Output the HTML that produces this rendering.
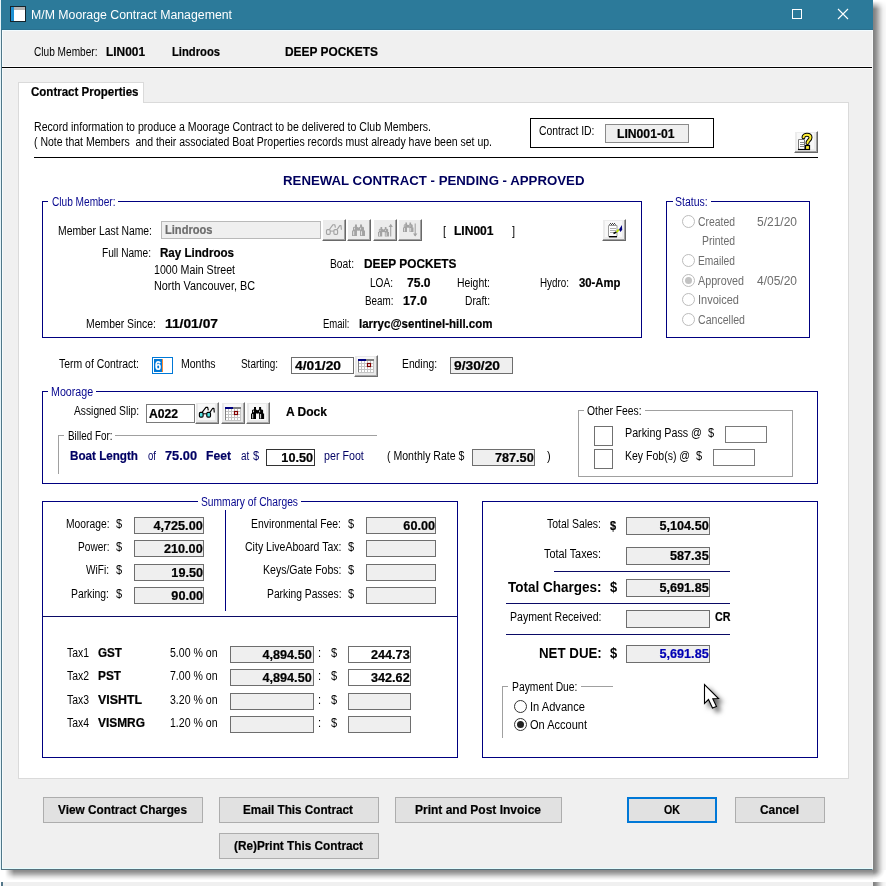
<!DOCTYPE html>
<html><head><meta charset="utf-8"><title>M/M Moorage Contract Management</title>
<style>
html,body{margin:0;padding:0}
body{width:886px;height:886px;overflow:hidden;position:relative;background:#fff;font-family:"Liberation Sans",sans-serif;}
.a{position:absolute;box-sizing:border-box}
#win{left:1px;top:0;width:872px;height:870px;background:#f0f0f0;border-left:1px solid #4f7789;border-right:1px solid #f6f8f9;border-bottom:1px solid #56707c}
#win2{left:1px;top:882px;width:872px;height:12px;background:#f0f0f0;border-left:2px solid #55788a}
#tb{left:1px;top:0;width:872px;height:30px;background:#2c7a9a}
.t{position:absolute;white-space:pre;transform-origin:0 0;color:#000;font-size:12px;line-height:16px}
.b{font-weight:bold;-webkit-text-stroke:0.2px}
.B{font-weight:bold;font-size:12px;line-height:16px}
.BB{font-weight:bold;font-size:14px;line-height:18px}
.h{font-weight:bold;font-size:13.5px;line-height:17px;color:#00005e}
.tt{font-size:12px;line-height:16px;color:#fff}
.n{color:#06068e}
.dn{color:#000064}
.g{color:#6d6d6d}
.bl{color:#0000b4}
.gb{border:1px solid #000080}
.gg{border:1px solid #a0a0a0}
.lab{background:#fff}
.f{background:#efefef;border:1px solid #6e6e6e}
.fw{background:#fff;border:1px solid #6e6e6e}
.btn{background:#e1e1e1;border:1px solid #adadad}
.ib{background:#ececec;border-top:1px solid #fff;border-left:1px solid #fff;border-right:1px solid #696969;border-bottom:1px solid #696969;box-shadow:inset -1px -1px 0 #a0a0a0}
.ib2{background:#e9e9e9;border-top:1px solid #fff;border-left:1px solid #fff;border-right:1px solid #6e6e6e;border-bottom:1px solid #6e6e6e;box-shadow:inset -1px -1px 0 #a8a8a8}
.rad{width:13px;height:13px;border-radius:50%;background:#fff;border:1px solid #333}
.radg{border-color:#bcbcbc}
.hl{background:#0a0a66;height:1px}
svg{position:absolute;overflow:visible}

.shr{background:linear-gradient(to right,rgba(0,0,0,.5) 0,rgba(0,0,0,.46) 2px,rgba(0,0,0,.37) 4px,rgba(0,0,0,.25) 6px,rgba(0,0,0,.14) 8px,rgba(0,0,0,.06) 10px,rgba(0,0,0,.02) 13px)}
.shb{background:linear-gradient(to bottom,rgba(0,0,0,.46) 0,rgba(0,0,0,.43) 1.5px,rgba(0,0,0,.31) 4px,rgba(0,0,0,.15) 6.5px,rgba(0,0,0,.06) 8.5px,rgba(0,0,0,0) 10.5px)}

</style></head>
<body>
<div class="a" style="left:0;top:0;width:1px;height:870px;background:#e4f3f8"></div>
<div id="win2" class="a"></div>
<div class="a shr" style="left:873px;top:0;width:13px;height:870px;-webkit-mask-image:linear-gradient(to bottom,transparent 1px,#000 9px);mask-image:linear-gradient(to bottom,transparent 1px,#000 9px)"></div>
<div class="a shb" style="left:2px;top:870px;width:871px;height:11px;-webkit-mask-image:linear-gradient(to right,transparent 3px,#000 12px);mask-image:linear-gradient(to right,transparent 3px,#000 12px)"></div>
<div class="a" style="left:873px;top:870px;width:13px;height:11px;background:radial-gradient(ellipse 12px 10px at 0 0,rgba(0,0,0,.5) 0,rgba(0,0,0,.4) 30%,rgba(0,0,0,.2) 55%,rgba(0,0,0,.06) 80%,rgba(0,0,0,0) 100%)"></div>
<div class="a shr" style="left:873px;top:882px;width:13px;height:4px"></div>
<div id="win" class="a"></div>
<div id="tb" class="a"></div>
<div class="a" style="left:2px;top:868px;width:871px;height:1px;background:#e4fdff"></div>
<div class="a" style="left:2px;top:31px;width:1px;height:837px;background:#f6fbfc"></div>
<!-- title icon -->
<div class="a" style="left:10px;top:6px;width:16px;height:16px;background:#fff;border:1px solid #14242c"></div>
<div class="a" style="left:11px;top:7px;width:3px;height:14px;background:#1e90d2"></div>
<div class="a" style="left:14px;top:7px;width:11px;height:3px;background:#b4b4b4"></div>
<!-- max / close -->
<div class="a" style="left:792px;top:9px;width:10px;height:10px;border:1px solid #fff"></div>
<svg style="left:838px;top:9px" width="10" height="10" viewBox="0 0 10 10"><path d="M0 0L10 10M10 0L0 10" stroke="#fff" stroke-width="1.1" fill="none"/></svg>
<!-- header strip line -->
<div class="a" style="left:2px;top:66px;width:870px;height:3px;background:#fbfbfb"></div>
<div class="a" style="left:2px;top:67px;width:870px;height:1px;background:#000"></div>
<div class="a" style="left:2px;top:30px;width:870px;height:1px;background:#f2fbff"></div>
<div class="a" style="left:1px;top:29px;width:872px;height:1px;background:#2a7190"></div>
<!-- tab panel -->
<div class="a" style="left:18px;top:102px;width:831px;height:677px;background:#fff;border:1px solid #dadada"></div>
<div class="a" style="left:18px;top:82px;width:126px;height:21px;background:#fff;border:1px solid #dadada;border-bottom:none"></div>
<!-- intro line -->
<div class="a" style="left:34px;top:157px;width:784px;height:1px;background:#000"></div>
<!-- contract id -->
<div class="a" style="left:530px;top:118px;width:184px;height:30px;border:1px solid #000"></div>
<div class="a f" style="left:605px;top:124px;width:84px;height:19px;border-color:#8a8a8a"></div>
<!-- help btn -->
<div class="a ib" style="left:794px;top:131px;width:24px;height:22px"></div>

<!-- club member group -->
<div class="a gb" style="left:42px;top:201px;width:600px;height:137px"></div>
<div class="a lab" style="left:48px;top:196px;width:70px;height:12px"></div>
<div class="a f" style="left:161px;top:221px;width:160px;height:18px;border-color:#b9b9b9"></div>
<div class="a ib" style="left:322px;top:219px;width:24px;height:22px"></div>
<div class="a ib" style="left:347px;top:219px;width:24px;height:22px"></div>
<div class="a ib" style="left:373px;top:219px;width:24px;height:22px"></div>
<div class="a ib" style="left:398px;top:219px;width:24px;height:22px"></div>
<div class="a ib" style="left:602px;top:219px;width:24px;height:22px"></div>
<!-- status group -->
<div class="a gb" style="left:666px;top:201px;width:144px;height:137px"></div>
<div class="a lab" style="left:673px;top:196px;width:38px;height:12px"></div>
<div class="a rad radg" style="left:682px;top:215px"></div>
<div class="a rad radg" style="left:682px;top:254px"></div>
<div class="a rad radg" style="left:682px;top:274px"></div>
<div class="a" style="left:685px;top:277px;width:7px;height:7px;border-radius:50%;background:#c2c2c2"></div>
<div class="a rad radg" style="left:682px;top:293px"></div>
<div class="a rad radg" style="left:682px;top:313px"></div>
<!-- term row -->
<div class="a" style="left:152px;top:357px;width:21px;height:17px;background:#fff;border:1px solid #0078d7"></div>
<div class="a" style="left:154px;top:359px;width:8px;height:13px;background:#0078d7"></div>
<div class="a" style="left:162px;top:359px;width:1px;height:13px;background:#ff8a30"></div>
<div class="a fw" style="left:291px;top:357px;width:63px;height:17px"></div>
<div class="a ib2" style="left:354px;top:355px;width:24px;height:22px"></div>
<div class="a f" style="left:450px;top:357px;width:63px;height:17px"></div>
<!-- moorage group -->
<div class="a gb" style="left:42px;top:391px;width:776px;height:93px"></div>
<div class="a lab" style="left:48px;top:386px;width:48px;height:12px"></div>
<div class="a fw" style="left:146px;top:404px;width:49px;height:19px;border-color:#7a7a7a"></div>
<div class="a ib2" style="left:195px;top:402px;width:24px;height:22px"></div>
<div class="a ib2" style="left:221px;top:402px;width:24px;height:22px"></div>
<div class="a ib2" style="left:246px;top:402px;width:24px;height:22px"></div>
<div class="a" style="left:58px;top:435px;width:319px;height:39px;border-top:1px solid #a0a0a0;border-left:1px solid #a0a0a0"></div>
<div class="a lab" style="left:64px;top:430px;width:51px;height:12px"></div>
<div class="a fw" style="left:266px;top:449px;width:49px;height:17px;border-color:#333"></div>
<div class="a f" style="left:472px;top:449px;width:63px;height:17px"></div>
<div class="a gg" style="left:578px;top:410px;width:215px;height:67px"></div>
<div class="a lab" style="left:584px;top:405px;width:61px;height:12px"></div>
<div class="a" style="left:594px;top:426px;width:19px;height:20px;background:#fff;border:1px solid #707070"></div>
<div class="a" style="left:594px;top:449px;width:19px;height:20px;background:#fff;border:1px solid #707070"></div>
<div class="a" style="left:725px;top:426px;width:42px;height:17px;background:#fff;border:1px solid #7a7a7a"></div>
<div class="a" style="left:713px;top:449px;width:42px;height:17px;background:#fff;border:1px solid #7a7a7a"></div>
<!-- summary group -->
<div class="a gb" style="left:42px;top:501px;width:416px;height:257px"></div>
<div class="a lab" style="left:198px;top:496px;width:103px;height:12px"></div>
<div class="a hl" style="left:42px;top:616px;width:416px"></div>
<div class="a" style="left:225px;top:510px;width:1px;height:101px;background:#000080"></div>
<div class="a f" style="left:134px;top:517px;width:70px;height:17px"></div>
<div class="a f" style="left:134px;top:540px;width:70px;height:17px"></div>
<div class="a f" style="left:134px;top:564px;width:70px;height:17px"></div>
<div class="a f" style="left:134px;top:587px;width:70px;height:17px"></div>
<div class="a f" style="left:366px;top:517px;width:70px;height:17px"></div>
<div class="a f" style="left:366px;top:540px;width:70px;height:17px"></div>
<div class="a f" style="left:366px;top:564px;width:70px;height:17px"></div>
<div class="a f" style="left:366px;top:587px;width:70px;height:17px"></div>
<div class="a f" style="left:230px;top:646px;width:84px;height:17px"></div>
<div class="a f" style="left:230px;top:669px;width:84px;height:17px"></div>
<div class="a f" style="left:230px;top:693px;width:84px;height:17px"></div>
<div class="a f" style="left:230px;top:716px;width:84px;height:17px"></div>
<div class="a fw" style="left:348px;top:646px;width:63px;height:17px"></div>
<div class="a fw" style="left:348px;top:669px;width:63px;height:17px"></div>
<div class="a f" style="left:348px;top:693px;width:63px;height:17px"></div>
<div class="a f" style="left:348px;top:716px;width:63px;height:17px"></div>
<!-- totals group -->
<div class="a gb" style="left:482px;top:501px;width:336px;height:257px"></div>
<div class="a f" style="left:626px;top:517px;width:84px;height:18px"></div>
<div class="a f" style="left:626px;top:547px;width:84px;height:18px"></div>
<div class="a f" style="left:626px;top:579px;width:84px;height:18px"></div>
<div class="a f" style="left:626px;top:610px;width:84px;height:18px"></div>
<div class="a f" style="left:626px;top:645px;width:84px;height:18px"></div>
<div class="a hl" style="left:554px;top:571px;width:176px"></div>
<div class="a hl" style="left:506px;top:603px;width:224px"></div>
<div class="a hl" style="left:506px;top:634px;width:224px"></div>
<div class="a" style="left:502px;top:686px;width:111px;height:52px;border-top:1px solid #a0a0a0;border-left:1px solid #a0a0a0"></div>
<div class="a lab" style="left:508px;top:681px;width:73px;height:12px"></div>
<div class="a rad" style="left:514px;top:700px"></div>
<div class="a rad" style="left:514px;top:718px"></div>
<div class="a" style="left:517px;top:721px;width:7px;height:7px;border-radius:50%;background:#222"></div>
<!-- cursor -->
<svg style="left:704px;top:684px" width="18" height="28" viewBox="0 0 18 28"><path d="M0.5 0.5V19.5L4.5 15.5L8.5 24L12.5 22.5L8.8 14.8L14.5 14.5Z" fill="#fff" stroke="#000" stroke-width="1.1" style="filter:drop-shadow(4px 4px 2.5px rgba(0,0,0,.6))"/></svg>
<!-- buttons -->
<div class="a btn" style="left:43px;top:797px;width:160px;height:26px"></div>
<div class="a btn" style="left:219px;top:797px;width:160px;height:26px"></div>
<div class="a btn" style="left:395px;top:797px;width:167px;height:26px"></div>
<div class="a btn" style="left:627px;top:797px;width:90px;height:26px;border:2px solid #0078d7"></div>
<div class="a btn" style="left:735px;top:797px;width:90px;height:26px"></div>
<div class="a btn" style="left:219px;top:833px;width:160px;height:26px"></div>
<!-- icon button inner faces -->
<div class="a" style="left:797px;top:133px;width:17px;height:16px;background:#f8f8f8"></div>
<div class="a" style="left:605px;top:221px;width:17px;height:16px;background:#f8f8f8"></div>
<div class="a" style="left:357px;top:357px;width:17px;height:16px;background:#f8f8f8"></div>
<div class="a" style="left:198px;top:404px;width:17px;height:16px;background:#f8f8f8"></div>
<div class="a" style="left:224px;top:404px;width:17px;height:16px;background:#f8f8f8"></div>
<div class="a" style="left:249px;top:404px;width:17px;height:16px;background:#f8f8f8"></div>
<svg style="left:797px;top:133px" width="18" height="18" viewBox="0 0 18 18">
<path d="M1.5 6.5h6v10h-6z" fill="#fff" stroke="#777" stroke-width="1"/><path d="M1 16.5h7" stroke="#000" stroke-width="1.2"/>
<path d="M3 9.5h4M3 11.5h4M3 13.5h4" stroke="#888" stroke-width="1"/>
<path d="M6.5 4.2C6.5 1 13.5 1 13.5 4.5C13.5 7 10.5 7.5 10.5 10" fill="none" stroke="#000" stroke-width="4" stroke-linecap="round"/>
<path d="M6.5 4.2C6.5 1 13.5 1 13.5 4.5C13.5 7 10.5 7.5 10.5 10" fill="none" stroke="#ffee33" stroke-width="2" stroke-linecap="round"/>
<rect x="8.5" y="12.5" width="4" height="4" fill="#ffee33" stroke="#000" stroke-width="1.2"/>
</svg>
<svg style="left:0;top:0" width="886" height="886" viewBox="0 0 886 886">
<rect x="326.5" y="229.6" width="3.7" height="4.8" rx="1.1" fill="none" stroke="#a3a3a3" stroke-width="1.15"/><rect x="333.9" y="229.6" width="3.7" height="4.8" rx="1.1" fill="none" stroke="#a3a3a3" stroke-width="1.15"/><path d="M330.2 231.1H333.9" stroke="#a3a3a3" stroke-width="1" fill="none"/><path d="M329.4 229.5L333.0 224.7H334.8L335.4 227.7" fill="none" stroke="#a3a3a3" stroke-width="1.15" stroke-linejoin="round"/><path d="M337.2 229.4L339.8 225.6H341.0L341.4 229.8" fill="none" stroke="#a3a3a3" stroke-width="1.15" stroke-linejoin="round"/>
<path d="M352.00 236.00L352.00 230.54L352.99 230.54L352.99 227.57L353.98 226.70L354.98 226.70L354.98 224.50L356.96 224.50L356.96 226.70L357.95 227.38L358.45 228.33L358.45 230.25L356.96 230.73L356.96 236.00Z" fill="#a3a3a3"/><path d="M365.00 236.00L365.00 230.54L364.01 230.54L364.01 227.57L363.02 226.70L362.02 226.70L362.02 224.50L360.04 224.50L360.04 226.70L359.05 227.38L358.55 228.33L358.55 230.25L360.04 230.73L360.04 236.00Z" fill="#a3a3a3"/><path d="M356.96 227.57L360.04 227.57L360.04 229.87L358.50 230.82L356.96 229.87Z" fill="#a3a3a3"/><path d="M353.29 231.21L354.18 231.21L354.18 235.33L353.29 235.33ZM361.13 231.21L362.02 231.21L362.02 235.33L361.13 235.33ZM353.98 227.76L354.78 227.76L354.78 229.48L353.98 229.48ZM360.24 227.76L361.03 227.76L361.03 229.48L360.24 229.48Z" fill="#ececec"/>
<path d="M378.00 236.50L378.00 231.99L378.84 231.99L378.84 229.53L379.68 228.82L380.52 228.82L380.52 227.00L382.20 227.00L382.20 228.82L383.04 229.38L383.46 230.17L383.46 231.75L382.20 232.15L382.20 236.50Z" fill="#a3a3a3"/><path d="M389.00 236.50L389.00 231.99L388.16 231.99L388.16 229.53L387.32 228.82L386.48 228.82L386.48 227.00L384.80 227.00L384.80 228.82L383.96 229.38L383.54 230.17L383.54 231.75L384.80 232.15L384.80 236.50Z" fill="#a3a3a3"/><path d="M382.20 229.53L384.80 229.53L384.80 231.43L383.50 232.22L382.20 231.43Z" fill="#a3a3a3"/><path d="M379.09 232.54L379.85 232.54L379.85 235.95L379.09 235.95ZM385.73 232.54L386.48 232.54L386.48 235.95L385.73 235.95ZM379.68 229.69L380.35 229.69L380.35 231.12L379.68 231.12ZM384.97 229.69L385.64 229.69L385.64 231.12L384.97 231.12Z" fill="#ececec"/><path d="M390.7 224.5V236.5" stroke="#a3a3a3" stroke-width="1.1" fill="none"/><path d="M388.5 227.1L390.7 223.9L392.9 227.1Z" fill="#a3a3a3"/>
<path d="M403.00 232.00L403.00 227.49L403.80 227.49L403.80 225.03L404.60 224.32L405.40 224.32L405.40 222.50L407.01 222.50L407.01 224.32L407.81 224.88L408.21 225.67L408.21 227.25L407.01 227.65L407.01 232.00Z" fill="#a3a3a3"/><path d="M413.50 232.00L413.50 227.49L412.70 227.49L412.70 225.03L411.90 224.32L411.10 224.32L411.10 222.50L409.49 222.50L409.49 224.32L408.69 224.88L408.29 225.67L408.29 227.25L409.49 227.65L409.49 232.00Z" fill="#a3a3a3"/><path d="M407.01 225.03L409.49 225.03L409.49 226.93L408.25 227.72L407.01 226.93Z" fill="#a3a3a3"/><path d="M404.04 228.04L404.76 228.04L404.76 231.45L404.04 231.45ZM410.37 228.04L411.10 228.04L411.10 231.45L410.37 231.45ZM404.60 225.19L405.24 225.19L405.24 226.62L404.60 226.62ZM409.65 225.19L410.29 225.19L410.29 226.62L409.65 226.62Z" fill="#ececec"/><path d="M415.2 223.5V236.0" stroke="#a3a3a3" stroke-width="1.1" fill="none"/><path d="M413.0 233.4L415.2 236.6L417.4 233.4Z" fill="#a3a3a3"/>
<rect x="199.4" y="412.3" width="3.7" height="4.8" rx="1.1" fill="#55e6e6" stroke="#000" stroke-width="1.15"/><rect x="206.8" y="412.3" width="3.7" height="4.8" rx="1.1" fill="#55e6e6" stroke="#000" stroke-width="1.15"/><path d="M203.1 413.8H206.8" stroke="#000" stroke-width="1" fill="none"/><path d="M202.3 412.2L205.9 407.4H207.7L208.3 410.4" fill="none" stroke="#000" stroke-width="1.15" stroke-linejoin="round"/><path d="M210.1 412.1L212.7 408.3H213.9L214.3 412.5" fill="none" stroke="#000" stroke-width="1.15" stroke-linejoin="round"/>
<rect x="225" y="407" width="16" height="13" fill="#fff"/><rect x="225" y="407" width="8" height="2" fill="#000080"/><rect x="233" y="407" width="8" height="2" fill="#808080"/><path d="M225.5 409v11M228.5 409v11M231.5 409v11M234.5 409v11M237.5 409v11M240.5 409v11M225 411.5h16M225 414.5h16M225 417.5h16M225 420.5h16" stroke="#c4c4c4" stroke-width="1" fill="none"/><path d="M225.5 409v11" stroke="#808080" stroke-width="1"/><rect x="234.5" y="411.5" width="3" height="3" fill="#fff" stroke="#800000" stroke-width="1.2"/>
<path d="M251.00 419.10L251.00 413.40L252.00 413.40L252.00 410.30L253.00 409.40L254.00 409.40L254.00 407.10L256.00 407.10L256.00 409.40L257.00 410.10L257.50 411.10L257.50 413.10L256.00 413.60L256.00 419.10Z" fill="#000"/><path d="M264.10 419.10L264.10 413.40L263.10 413.40L263.10 410.30L262.10 409.40L261.10 409.40L261.10 407.10L259.10 407.10L259.10 409.40L258.10 410.10L257.60 411.10L257.60 413.10L259.10 413.60L259.10 419.10Z" fill="#000"/><path d="M256.00 410.30L259.10 410.30L259.10 412.70L257.55 413.70L256.00 412.70Z" fill="#000"/><path d="M252.30 414.10L253.20 414.10L253.20 418.40L252.30 418.40ZM260.20 414.10L261.10 414.10L261.10 418.40L260.20 418.40ZM253.00 410.50L253.80 410.50L253.80 412.30L253.00 412.30ZM259.30 410.50L260.10 410.50L260.10 412.30L259.30 412.30Z" fill="#fff"/>
<rect x="358" y="359" width="16" height="13" fill="#fff"/><rect x="358" y="359" width="8" height="2" fill="#000080"/><rect x="366" y="359" width="8" height="2" fill="#808080"/><path d="M358.5 361v11M361.5 361v11M364.5 361v11M367.5 361v11M370.5 361v11M373.5 361v11M358 363.5h16M358 366.5h16M358 369.5h16M358 372.5h16" stroke="#c4c4c4" stroke-width="1" fill="none"/><path d="M358.5 361v11" stroke="#808080" stroke-width="1"/><rect x="367.5" y="363.5" width="3" height="3" fill="#fff" stroke="#800000" stroke-width="1.2"/>
<path d="M608.5 225.5h8.5v11h-8.5z" fill="#fff" stroke="#9a9a9a" stroke-width="1"/><path d="M609 236.7h8" stroke="#000" stroke-width="1.4"/><path d="M609.5 224.5l1-1 1 1 1-1 1 1 1-1 1 1" stroke="#000" stroke-width="1" fill="none"/><path d="M610 228.5h6M610 230.5h6M610 232.5h4" stroke="#b0b0b0" stroke-width="1"/><path d="M613.5 233.5l3-1.5" stroke="#000" stroke-width="1.4"/><path d="M616.5 232l2.5-2.5" stroke="#b8e000" stroke-width="1.8"/><path d="M619 229.6l2.9-4.6 0.3 4.8-1.7 2.3z" fill="#000080"/>
</svg>

<div id="txt">
<span id="t0" class="t r" style="top:44.00px;left:33.50px;transform:scaleX(0.8426);">Club Member:</span>
<span id="t1" class="t b" style="top:44.00px;left:106.00px;transform:scaleX(0.9909);">LIN001</span>
<span id="t2" class="t b" style="top:44.00px;left:172.00px;transform:scaleX(0.9352);">Lindroos</span>
<span id="t3" class="t b" style="top:44.00px;left:285.00px;transform:scaleX(0.9913);">DEEP POCKETS</span>
<span id="t4" class="t b" style="top:84.00px;left:30.50px;transform:scaleX(0.9596);">Contract Properties</span>
<span id="t5" class="t r" style="top:119.00px;left:34.00px;transform:scaleX(0.8804);">Record information to produce a Moorage Contract to be delivered to Club Members.</span>
<span id="t6" class="t r" style="top:134.00px;left:34.00px;transform:scaleX(0.8747);">( Note that Members  and their associated Boat Properties records must already have been set up.</span>
<span id="t7" class="t r" style="top:123.00px;left:538.50px;transform:scaleX(0.8668);">Contract ID:</span>
<span id="t8" class="t b" style="top:126.00px;left:616.50px;transform:scaleX(1.0141);">LIN001-01</span>
<span id="t9" class="t h" style="top:172.00px;left:282.50px;transform:scaleX(0.9804);">RENEWAL CONTRACT - PENDING - APPROVED</span>
<span id="t10" class="t r n" style="top:194.00px;left:51.50px;transform:scaleX(0.8426);">Club Member:</span>
<span id="t11" class="t r" style="top:223.00px;left:58.00px;transform:scaleX(0.8647);">Member Last Name:</span>
<span id="t12" class="t b g" style="top:222.00px;left:164.50px;transform:scaleX(0.9254);">Lindroos</span>
<span id="t13" class="t r" style="top:223.00px;left:443.00px;transform:scaleX(0.92);">[</span>
<span id="t14" class="t b" style="top:223.00px;left:453.50px;transform:scaleX(1.0036);">LIN001</span>
<span id="t15" class="t r" style="top:223.00px;left:511.50px;transform:scaleX(0.92);">]</span>
<span id="t16" class="t r" style="top:245.00px;left:102.00px;transform:scaleX(0.8446);">Full Name:</span>
<span id="t17" class="t b" style="top:245.00px;left:160.00px;transform:scaleX(0.9650);">Ray Lindroos</span>
<span id="t18" class="t r" style="top:262.00px;left:154.00px;transform:scaleX(0.8863);">1000 Main Street</span>
<span id="t19" class="t r" style="top:278.00px;left:154.00px;transform:scaleX(0.9030);">North Vancouver, BC</span>
<span id="t20" class="t r" style="top:316.00px;left:86.00px;transform:scaleX(0.8674);">Member Since:</span>
<span id="t21" class="t b" style="top:316.00px;left:165.00px;transform:scaleX(1.1506);">11/01/07</span>
<span id="t22" class="t r" style="top:256.00px;left:330.00px;transform:scaleX(0.8562);">Boat:</span>
<span id="t23" class="t b" style="top:256.00px;left:363.50px;transform:scaleX(0.9860);">DEEP POCKETS</span>
<span id="t24" class="t r" style="top:275.00px;left:370.00px;transform:scaleX(0.8407);">LOA:</span>
<span id="t25" class="t b" style="top:275.00px;left:406.50px;transform:scaleX(1.0060);">75.0</span>
<span id="t26" class="t r" style="top:293.00px;left:364.50px;transform:scaleX(0.8216);">Beam:</span>
<span id="t27" class="t b" style="top:293.00px;left:402.50px;transform:scaleX(1.0274);">17.0</span>
<span id="t28" class="t r" style="top:275.00px;left:456.50px;transform:scaleX(0.8677);">Height:</span>
<span id="t29" class="t r" style="top:293.00px;left:464.50px;transform:scaleX(0.8520);">Draft:</span>
<span id="t30" class="t r" style="top:275.00px;left:539.50px;transform:scaleX(0.8205);">Hydro:</span>
<span id="t31" class="t b" style="top:275.00px;left:578.50px;transform:scaleX(0.9428);">30-Amp</span>
<span id="t32" class="t r" style="top:316.00px;left:322.50px;transform:scaleX(0.7948);">Email:</span>
<span id="t33" class="t b" style="top:316.00px;left:358.50px;transform:scaleX(0.9599);">larryc@sentinel-hill.com</span>
<span id="t34" class="t r n" style="top:194.00px;left:675.30px;transform:scaleX(0.8753);">Status:</span>
<span id="t35" class="t r g" style="top:214.00px;left:698.00px;transform:scaleX(0.8664);">Created</span>
<span id="t36" class="t r g" style="top:214.00px;left:757.00px;transform:scaleX(0.9988);">5/21/20</span>
<span id="t37" class="t r g" style="top:233.00px;left:702.00px;transform:scaleX(0.8677);">Printed</span>
<span id="t38" class="t r g" style="top:253.00px;left:698.00px;transform:scaleX(0.8533);">Emailed</span>
<span id="t39" class="t r g" style="top:273.00px;left:698.00px;transform:scaleX(0.8954);">Approved</span>
<span id="t40" class="t r g" style="top:273.00px;left:757.00px;transform:scaleX(0.9988);">4/05/20</span>
<span id="t41" class="t r g" style="top:292.00px;left:698.00px;transform:scaleX(0.9172);">Invoiced</span>
<span id="t42" class="t r g" style="top:312.00px;left:698.00px;transform:scaleX(0.8806);">Cancelled</span>
<span id="t43" class="t r" style="top:356.00px;left:59.00px;transform:scaleX(0.8693);">Term of Contract:</span>
<span id="t44" class="t b" style="top:358.00px;left:155.00px;transform:scaleX(0.92);color:#fff;">6</span>
<span id="t45" class="t r" style="top:356.00px;left:181.00px;transform:scaleX(0.8765);">Months</span>
<span id="t46" class="t r" style="top:356.00px;left:241.00px;transform:scaleX(0.8277);">Starting:</span>
<span id="t47" class="t b" style="top:358.00px;left:294.50px;transform:scaleX(1.1487);">4/01/20</span>
<span id="t48" class="t r" style="top:356.00px;left:402.00px;transform:scaleX(0.8599);">Ending:</span>
<span id="t49" class="t b" style="top:358.00px;left:453.50px;transform:scaleX(1.1487);">9/30/20</span>
<span id="t50" class="t r n" style="top:384.00px;left:50.80px;transform:scaleX(0.8908);">Moorage</span>
<span id="t51" class="t r" style="top:403.00px;left:74.00px;transform:scaleX(0.8547);">Assigned Slip:</span>
<span id="t52" class="t b" style="top:406.00px;left:149.00px;transform:scaleX(1.0109);">A022</span>
<span id="t53" class="t b" style="top:404.00px;left:286.00px;transform:scaleX(1.0023);">A Dock</span>
<span id="t54" class="t r" style="top:428.00px;left:67.50px;transform:scaleX(0.8236);">Billed For:</span>
<span id="t55" class="t b dn" style="top:448.00px;left:69.50px;transform:scaleX(0.9714);">Boat Length</span>
<span id="t56" class="t r dn" style="top:448.00px;left:147.50px;transform:scaleX(0.7988);">of</span>
<span id="t57" class="t b dn" style="top:448.00px;left:165.00px;transform:scaleX(1.0656);">75.00</span>
<span id="t58" class="t b dn" style="top:448.00px;left:206.00px;transform:scaleX(1.0127);">Feet</span>
<span id="t59" class="t r dn" style="top:448.00px;left:240.70px;transform:scaleX(0.8287);">at</span>
<span id="t60" class="t r dn" style="top:448.00px;left:252.50px;transform:scaleX(0.92);">$</span>
<span id="t61" class="t b" style="top:450.00px;right:572.80px;transform-origin:100% 0;transform:scaleX(1.055);">10.50</span>
<span id="t62" class="t r dn" style="top:448.00px;left:323.50px;transform:scaleX(0.8903);">per Foot</span>
<span id="t63" class="t r" style="top:448.00px;left:386.50px;transform:scaleX(0.8802);">( Monthly Rate $</span>
<span id="t64" class="t b" style="top:450.00px;right:352.30px;transform-origin:100% 0;transform:scaleX(1.055);">787.50</span>
<span id="t65" class="t r" style="top:448.00px;left:546.50px;transform:scaleX(0.92);">)</span>
<span id="t66" class="t r" style="top:403.00px;left:587.00px;transform:scaleX(0.8602);">Other Fees:</span>
<span id="t67" class="t r" style="top:425.00px;left:625.00px;transform:scaleX(0.8931);">Parking Pass @</span>
<span id="t68" class="t r" style="top:425.00px;left:708.00px;transform:scaleX(0.92);">$</span>
<span id="t69" class="t r" style="top:448.00px;left:625.00px;transform:scaleX(0.8760);">Key Fob(s) @</span>
<span id="t70" class="t r" style="top:448.00px;left:696.00px;transform:scaleX(0.92);">$</span>
<span id="t71" class="t r n" style="top:494.00px;left:201.00px;transform:scaleX(0.8556);">Summary of Charges</span>
<span id="t72" class="t r" style="top:516.00px;left:65.50px;transform:scaleX(0.8579);">Moorage:</span>
<span id="t73" class="t r" style="top:516.00px;left:116.00px;transform:scaleX(0.92);">$</span>
<span id="t74" class="t r" style="top:539.00px;left:77.50px;transform:scaleX(0.8432);">Power:</span>
<span id="t75" class="t r" style="top:539.00px;left:116.00px;transform:scaleX(0.92);">$</span>
<span id="t76" class="t r" style="top:562.00px;left:86.00px;transform:scaleX(0.8416);">WiFi:</span>
<span id="t77" class="t r" style="top:562.00px;left:116.00px;transform:scaleX(0.92);">$</span>
<span id="t78" class="t r" style="top:586.00px;left:71.00px;transform:scaleX(0.8630);">Parking:</span>
<span id="t79" class="t r" style="top:586.00px;left:116.00px;transform:scaleX(0.92);">$</span>
<span id="t80" class="t b" style="top:518.00px;right:683.30px;transform-origin:100% 0;transform:scaleX(1.055);">4,725.00</span>
<span id="t81" class="t b" style="top:541.00px;right:683.30px;transform-origin:100% 0;transform:scaleX(1.055);">210.00</span>
<span id="t82" class="t b" style="top:565.00px;right:683.30px;transform-origin:100% 0;transform:scaleX(1.055);">19.50</span>
<span id="t83" class="t b" style="top:588.00px;right:683.30px;transform-origin:100% 0;transform:scaleX(1.055);">90.00</span>
<span id="t84" class="t r" style="top:516.00px;left:251.00px;transform:scaleX(0.8649);">Environmental Fee:</span>
<span id="t85" class="t r" style="top:516.00px;left:348.00px;transform:scaleX(0.92);">$</span>
<span id="t86" class="t r" style="top:539.00px;left:244.50px;transform:scaleX(0.8785);">City LiveAboard Tax:</span>
<span id="t87" class="t r" style="top:539.00px;left:348.00px;transform:scaleX(0.92);">$</span>
<span id="t88" class="t r" style="top:562.00px;left:262.50px;transform:scaleX(0.8783);">Keys/Gate Fobs:</span>
<span id="t89" class="t r" style="top:562.00px;left:348.00px;transform:scaleX(0.92);">$</span>
<span id="t90" class="t r" style="top:586.00px;left:266.50px;transform:scaleX(0.8591);">Parking Passes:</span>
<span id="t91" class="t r" style="top:586.00px;left:348.00px;transform:scaleX(0.92);">$</span>
<span id="t92" class="t b" style="top:518.00px;right:451.30px;transform-origin:100% 0;transform:scaleX(1.055);">60.00</span>
<span id="t93" class="t r" style="top:645.00px;left:67.00px;transform:scaleX(0.8675);">Tax1</span>
<span id="t94" class="t b" style="top:645.00px;left:98.00px;transform:scaleX(0.9728);">GST</span>
<span id="t95" class="t r" style="top:645.00px;left:170.00px;transform:scaleX(0.8789);">5.00 % on</span>
<span id="t96" class="t r" style="top:645.00px;left:318.00px;transform:scaleX(0.92);">:</span>
<span id="t97" class="t r" style="top:645.00px;left:330.50px;transform:scaleX(0.92);">$</span>
<span id="t98" class="t r" style="top:668.00px;left:67.00px;transform:scaleX(0.8675);">Tax2</span>
<span id="t99" class="t b" style="top:668.00px;left:98.00px;transform:scaleX(0.9853);">PST</span>
<span id="t100" class="t r" style="top:668.00px;left:170.00px;transform:scaleX(0.8789);">7.00 % on</span>
<span id="t101" class="t r" style="top:668.00px;left:318.00px;transform:scaleX(0.92);">:</span>
<span id="t102" class="t r" style="top:668.00px;left:330.50px;transform:scaleX(0.92);">$</span>
<span id="t103" class="t r" style="top:692.00px;left:67.00px;transform:scaleX(0.8675);">Tax3</span>
<span id="t104" class="t b" style="top:692.00px;left:98.00px;transform:scaleX(1.0311);">VISHTL</span>
<span id="t105" class="t r" style="top:692.00px;left:170.00px;transform:scaleX(0.8789);">3.20 % on</span>
<span id="t106" class="t r" style="top:692.00px;left:318.00px;transform:scaleX(0.92);">:</span>
<span id="t107" class="t r" style="top:692.00px;left:330.50px;transform:scaleX(0.92);">$</span>
<span id="t108" class="t r" style="top:715.00px;left:67.00px;transform:scaleX(0.8675);">Tax4</span>
<span id="t109" class="t b" style="top:715.00px;left:98.00px;transform:scaleX(0.9927);">VISMRG</span>
<span id="t110" class="t r" style="top:715.00px;left:170.00px;transform:scaleX(0.8789);">1.20 % on</span>
<span id="t111" class="t r" style="top:715.00px;left:318.00px;transform:scaleX(0.92);">:</span>
<span id="t112" class="t r" style="top:715.00px;left:330.50px;transform:scaleX(0.92);">$</span>
<span id="t113" class="t b" style="top:647.00px;right:573.80px;transform-origin:100% 0;transform:scaleX(1.055);">4,894.50</span>
<span id="t114" class="t b" style="top:670.00px;right:573.80px;transform-origin:100% 0;transform:scaleX(1.055);">4,894.50</span>
<span id="t115" class="t b" style="top:647.00px;right:476.30px;transform-origin:100% 0;transform:scaleX(1.055);">244.73</span>
<span id="t116" class="t b" style="top:670.00px;right:476.30px;transform-origin:100% 0;transform:scaleX(1.055);">342.62</span>
<span id="t117" class="t r" style="top:516.00px;left:547.00px;transform:scaleX(0.8703);">Total Sales:</span>
<span id="t118" class="t b" style="top:518.00px;left:610.00px;transform:scaleX(0.92);">$</span>
<span id="t119" class="t b" style="top:518.00px;right:177.30px;transform-origin:100% 0;transform:scaleX(1.055);">5,104.50</span>
<span id="t120" class="t r" style="top:546.00px;left:544.00px;transform:scaleX(0.9025);">Total Taxes:</span>
<span id="t121" class="t b" style="top:548.00px;right:177.30px;transform-origin:100% 0;transform:scaleX(1.055);">587.35</span>
<span id="t122" class="t BB" style="top:578.00px;left:508.00px;transform:scaleX(0.9651);">Total Charges:</span>
<span id="t123" class="t BB" style="top:578.00px;left:610.30px;transform:scaleX(0.92);">$</span>
<span id="t124" class="t b" style="top:580.00px;right:177.30px;transform-origin:100% 0;transform:scaleX(1.055);">5,691.85</span>
<span id="t125" class="t r" style="top:609.00px;left:509.50px;transform:scaleX(0.8793);">Payment Received:</span>
<span id="t126" class="t b" style="top:609.00px;left:715.00px;transform:scaleX(0.8937);">CR</span>
<span id="t127" class="t BB" style="top:644.00px;left:538.80px;transform:scaleX(0.9497);">NET DUE:</span>
<span id="t128" class="t BB" style="top:644.00px;left:610.30px;transform:scaleX(0.92);">$</span>
<span id="t129" class="t b bl" style="top:646.00px;right:177.30px;transform-origin:100% 0;transform:scaleX(1.055);">5,691.85</span>
<span id="t130" class="t r" style="top:679.00px;left:511.50px;transform:scaleX(0.8613);">Payment Due:</span>
<span id="t131" class="t r" style="top:699.00px;left:530.00px;transform:scaleX(0.9261);">In Advance</span>
<span id="t132" class="t r" style="top:717.00px;left:530.00px;transform:scaleX(0.9187);">On Account</span>
<span id="t133" class="t b" style="top:802.00px;left:58.00px;transform:scaleX(0.9836);">View Contract Charges</span>
<span id="t134" class="t b" style="top:802.00px;left:243.00px;transform:scaleX(0.9762);">Email This Contract</span>
<span id="t135" class="t b" style="top:802.00px;left:415.00px;transform:scaleX(0.9998);">Print and Post Invoice</span>
<span id="t136" class="t b" style="top:802.00px;left:664.00px;transform:scaleX(0.8889);">OK</span>
<span id="t137" class="t b" style="top:802.00px;left:760.00px;transform:scaleX(0.9909);">Cancel</span>
<span id="t138" class="t b" style="top:838.00px;left:234.00px;transform:scaleX(0.9822);">(Re)Print This Contract</span>
<span id="t139" class="t tt" style="top:7.00px;left:31.00px;transform:scaleX(1.0250);">M/M Moorage Contract Management</span>
</div>
</body></html>
